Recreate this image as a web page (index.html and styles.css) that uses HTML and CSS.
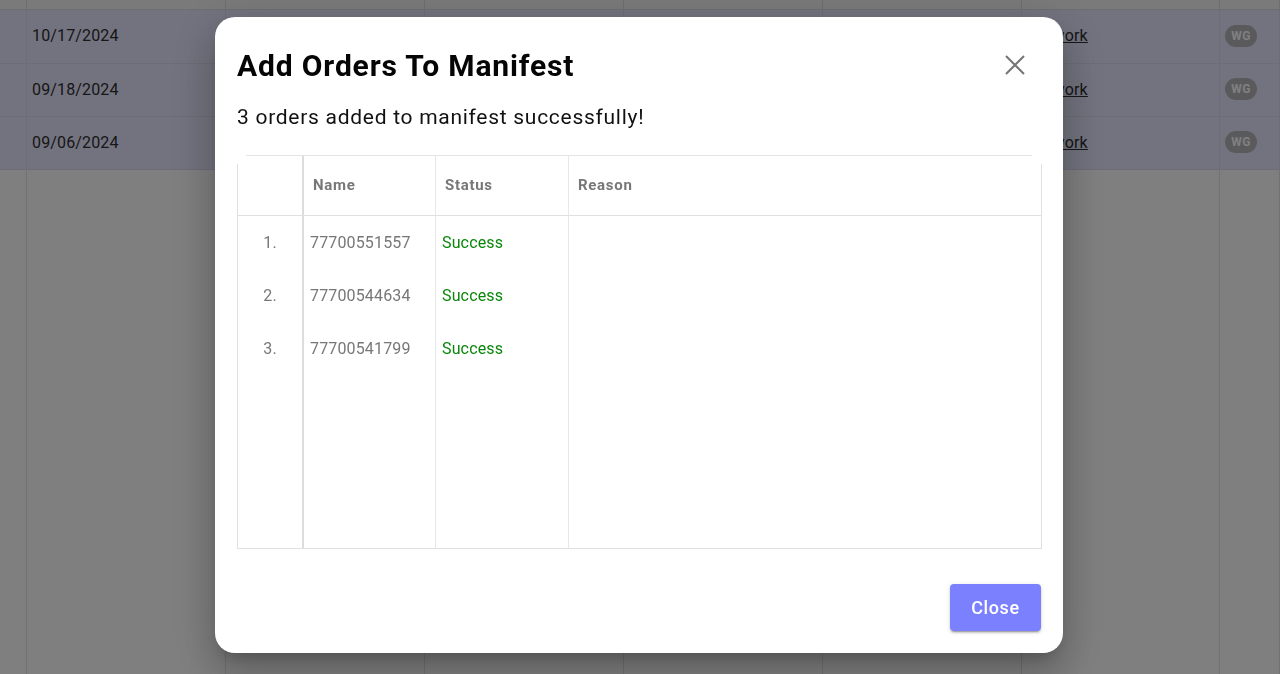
FILE: index.html
```html
<!DOCTYPE html>
<html lang="en">
<head>
<meta charset="utf-8">
<title>Add Orders To Manifest</title>
<link rel="stylesheet" href="styles.css">
</head>
<body>
<div class="page">
  <div class="bg-grid">
    <div class="bg-cell bg-head"></div><div class="bg-cell bg-head"></div><div class="bg-cell bg-head"></div><div class="bg-cell bg-head"></div><div class="bg-cell bg-head"></div><div class="bg-cell bg-head"></div><div class="bg-cell bg-head"></div><div class="bg-cell bg-head"></div>

    <div class="bg-cell bg-sel"></div><div class="bg-cell bg-sel">10/17/2024</div><div class="bg-cell bg-sel"></div><div class="bg-cell bg-sel"></div><div class="bg-cell bg-sel"></div><div class="bg-cell bg-sel"></div><div class="bg-cell bg-sel"><a class="bg-link" href="#">Network</a></div><div class="bg-cell bg-sel"><span class="badge">WG</span></div>

    <div class="bg-cell bg-sel"></div><div class="bg-cell bg-sel">09/18/2024</div><div class="bg-cell bg-sel"></div><div class="bg-cell bg-sel"></div><div class="bg-cell bg-sel"></div><div class="bg-cell bg-sel"></div><div class="bg-cell bg-sel"><a class="bg-link" href="#">Network</a></div><div class="bg-cell bg-sel"><span class="badge">WG</span></div>

    <div class="bg-cell bg-sel"></div><div class="bg-cell bg-sel">09/06/2024</div><div class="bg-cell bg-sel"></div><div class="bg-cell bg-sel"></div><div class="bg-cell bg-sel"></div><div class="bg-cell bg-sel"></div><div class="bg-cell bg-sel"><a class="bg-link" href="#">Network</a></div><div class="bg-cell bg-sel"><span class="badge">WG</span></div>

    <div class="bg-cell"></div><div class="bg-cell"></div><div class="bg-cell"></div><div class="bg-cell"></div><div class="bg-cell"></div><div class="bg-cell"></div><div class="bg-cell"></div><div class="bg-cell"></div>
  </div>
</div>

<div class="backdrop">
  <div class="dialog" role="dialog" aria-labelledby="dlg-title">
    <div class="dialog-head">
      <h2 class="dialog-title" id="dlg-title">Add Orders To Manifest</h2>
      <button class="icon-btn" aria-label="close">
        <svg width="24" height="24" viewBox="0 0 24 24" aria-hidden="true">
          <path d="M3 3 L21 21 M21 3 L3 21" stroke="#757575" stroke-width="2" fill="none"/>
        </svg>
      </button>
    </div>
    <p class="dialog-msg">3 orders added to manifest successfully!</p>

    <div class="grid">
      <div class="hc c-num"></div>
      <div class="hc c-name">Name</div>
      <div class="hc c-status">Status</div>
      <div class="hc c-reason">Reason</div>

      <div class="bc c-num">1.</div>
      <div class="bc c-name">77700551557</div>
      <div class="bc c-status ok">Success</div>
      <div class="bc c-reason"></div>

      <div class="bc c-num">2.</div>
      <div class="bc c-name">77700544634</div>
      <div class="bc c-status ok">Success</div>
      <div class="bc c-reason"></div>

      <div class="bc c-num">3.</div>
      <div class="bc c-name">77700541799</div>
      <div class="bc c-status ok">Success</div>
      <div class="bc c-reason"></div>

      <div class="bc c-num"></div>
      <div class="bc c-name"></div>
      <div class="bc c-status"></div>
      <div class="bc c-reason"></div>
    </div>

    <div class="actions">
      <button class="btn">Close</button>
    </div>
  </div>
</div>
</body>
</html>
```

FILE: styles.css
```css
* { box-sizing: border-box; }

body {
  margin: 0;
  font-family: Roboto, "Noto Sans", "Liberation Sans", sans-serif;
  background: #fff;
}

.page {
  height: 674px;
  overflow: hidden;
}

.bg-grid {
  display: grid;
  grid-template-columns: 27px repeat(5, 199px) 198px 1fr;
  grid-template-rows: 10px 54px 53px 53px 1fr;
  height: 674px;
}

.bg-cell {
  display: flex;
  align-items: center;
  padding: 0 5px;
  border-right: 1px solid #e4e4e4;
  font-size: 16px;
  letter-spacing: 0.15px;
  color: #2e2e2e;
}

.bg-head {
  background: #f5f5f5;
  border-bottom: 1px solid #dcdcdc;
  border-right-color: #dcdcdc;
}

.bg-sel {
  background: #e6e6ff;
  border-bottom: 1px solid #dadaf0;
  border-right-color: #dadaf0;
  padding-bottom: 2px;
}

.bg-link {
  color: #2e2e2e;
  text-decoration: underline;
}

.badge {
  display: inline-flex;
  align-items: center;
  justify-content: center;
  width: 32px;
  height: 22px;
  border-radius: 11px;
  background: #b4b4b8;
  color: #fff;
  font-size: 12px;
  font-weight: 700;
  letter-spacing: 0.3px;
}

.backdrop {
  position: fixed;
  inset: 0;
  background: rgba(0, 0, 0, 0.5);
  display: flex;
  align-items: flex-start;
  justify-content: flex-start;
  padding: 17px 0 0 215px;
}

.dialog {
  width: 848px;
  height: 636px;
  background: #fff;
  border-radius: 20px;
  padding: 32px 21px 22px 22px;
  display: flex;
  flex-direction: column;
  box-shadow: 0 11px 15px -7px rgba(0, 0, 0, 0.2),
              0 24px 38px 3px rgba(0, 0, 0, 0.14),
              0 9px 46px 8px rgba(0, 0, 0, 0.12);
}

.dialog-head {
  display: flex;
  align-items: center;
  justify-content: space-between;
  height: 34px;
}

.dialog-title {
  margin: 0;
  font-size: 30px;
  line-height: 34px;
  font-weight: 700;
  letter-spacing: 0.85px;
  color: #050505;
}

.icon-btn {
  width: 40px;
  height: 40px;
  margin: -3px 7px 0 0;
  padding: 0;
  border: 0;
  background: none;
  display: flex;
  align-items: center;
  justify-content: center;
  cursor: pointer;
}

.dialog-msg {
  margin: 22px 0 0;
  font-size: 21px;
  line-height: 25px;
  letter-spacing: 0.72px;
  color: #111;
}

.grid {
  margin-top: 25px;
  height: 394px;
  padding: 1px;
  display: grid;
  grid-template-columns: 64px 134px 133px 1fr;
  grid-template-rows: 60px 53px 53px 53px 1fr;
  background:
    linear-gradient(#e4e4e4, #e4e4e4) 9px 0 / calc(100% - 19px) 1px no-repeat,
    linear-gradient(#e0e0e0, #e0e0e0) 0 9px / 1px calc(100% - 9px) no-repeat,
    linear-gradient(#e0e0e0, #e0e0e0) 100% 9px / 1px calc(100% - 9px) no-repeat,
    linear-gradient(#e0e0e0, #e0e0e0) 0 100% / 100% 1px no-repeat;
}

.hc {
  display: flex;
  align-items: center;
  padding: 0 0 2px 9px;
  border-bottom: 1px solid #e0e0e0;
  font-size: 15px;
  font-weight: 700;
  letter-spacing: 0.7px;
  color: #777;
}

.c-name {
  border-left: 2px solid #dcdcdc;
  border-right: 1px solid #e8e8e8;
}

.c-status {
  border-right: 1px solid #e8e8e8;
}

.bc {
  display: flex;
  align-items: center;
  padding: 0 6px;
  font-size: 16px;
  letter-spacing: 0.15px;
  color: #777;
}

.bc.c-num {
  justify-content: center;
  padding: 0;
}

.ok {
  color: #0a870a;
}

.actions {
  margin-top: auto;
  display: flex;
  justify-content: flex-end;
  padding-right: 1px;
}

.btn {
  width: 91px;
  height: 47px;
  border: 0;
  border-radius: 4px;
  background: #7b80ff;
  color: #fff;
  font-family: Roboto, "Noto Sans", sans-serif;
  font-size: 18px;
  font-weight: 500;
  letter-spacing: 0.6px;
  cursor: pointer;
  box-shadow: 0 3px 1px -2px rgba(0, 0, 0, 0.2),
              0 2px 2px 0 rgba(0, 0, 0, 0.14),
              0 1px 5px 0 rgba(0, 0, 0, 0.12);
}
```
